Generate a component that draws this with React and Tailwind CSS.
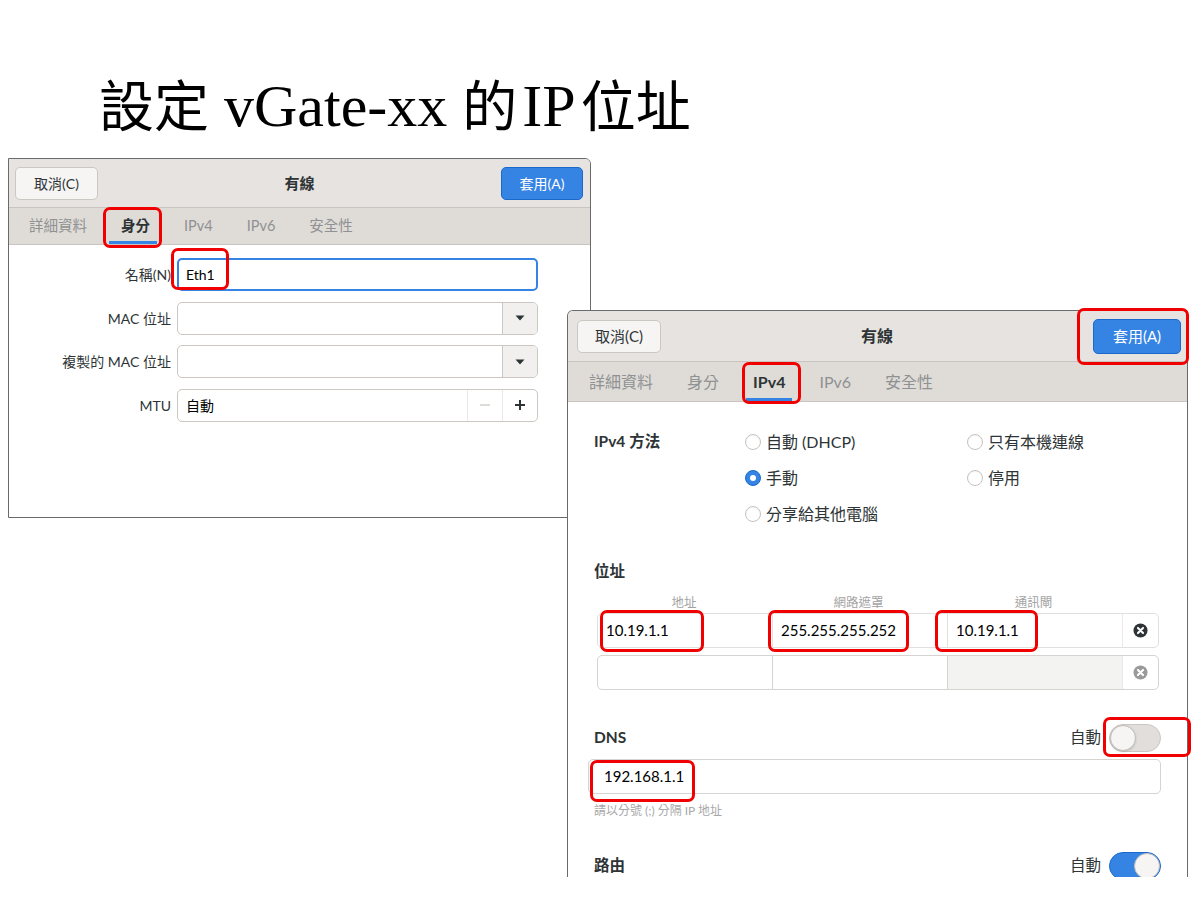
import React from 'react'

const ui = "font-['Lato','Noto_Sans_CJK_TC',sans-serif]"

function Caret() {
  return (
    <svg width="10" height="6" viewBox="0 0 10 6">
      <path d="M0.5 0.5 L9.5 0.5 L5 5.5 Z" fill="#2e3436" />
    </svg>
  )
}

function ClearIcon({ color }) {
  return (
    <svg width="15" height="15" viewBox="0 0 16 16">
      <circle cx="8" cy="8" r="7.5" fill={color} />
      <path d="M5.3 5.3 L10.7 10.7 M10.7 5.3 L5.3 10.7" stroke="#fff" strokeWidth="2.2" strokeLinecap="round" />
    </svg>
  )
}

function Radio({ checked, label }) {
  return (
    <div className="flex items-center h-[36px] gap-[5px]">
      {checked ? (
        <span className="w-[16px] h-[16px] rounded-full bg-[#3584e4] border border-[#1b6acb] flex items-center justify-center">
          <span className="w-[6px] h-[6px] rounded-full bg-white" />
        </span>
      ) : (
        <span className="w-[16px] h-[16px] rounded-full bg-white border border-[#c6c2be] shadow-[inset_0_1px_1px_rgba(0,0,0,0.05)]" />
      )}
      <span className="text-[16px] text-[#2e3436]">{label}</span>
    </div>
  )
}

function Toggle({ on }) {
  return on ? (
    <div className="w-[52px] h-[28px] rounded-full bg-[#3584e4] border border-[#1b6acb] flex items-center justify-end">
      <span className="w-[26px] h-[26px] rounded-full bg-[#f6f5f4] border border-[#c0bdba]" />
    </div>
  ) : (
    <div className="w-[52px] h-[28px] rounded-full bg-[#e1dedb] border border-[#cdc7c2] flex items-center">
      <span className="w-[26px] h-[26px] rounded-full bg-[#f6f5f4] border border-[#c0bdba] shadow-sm" />
    </div>
  )
}

function Tabs({ items, active, size }) {
  const lg = size === 'lg'
  return (
    <div className={`flex items-stretch bg-[#dfdcd8] border-b border-[#c9c4bf] ${lg ? 'h-[40px] pl-[4px] text-[16px]' : 'h-[37px] pl-[3px] text-[14.5px]'}`}>
      {items.map((t) => (
        <div key={t} className={`relative flex items-center ${lg ? 'px-[17px]' : 'px-[17px]'} ${t === active ? 'font-bold text-[#2e3436]' : 'text-[#8f9192]'}`}>
          {t}
          {t === active && (
            <span className={`absolute bottom-0 h-[3px] bg-[#3584e4] ${lg ? 'left-[10px] right-[10px]' : 'left-[5px] right-[10px]'}`} />
          )}
        </div>
      ))}
    </div>
  )
}

function RedBox({ className }) {
  return <div className={`absolute border-[3px] border-[#f00000] rounded-[7px] ${className}`} />
}

export default function App() {
  const tabs = ['詳細資料', '身分', 'IPv4', 'IPv6', '安全性']

  return (
    <div className="relative w-[1200px] h-[900px] bg-white overflow-hidden">
      <h1 className="pt-[76px] pl-[99px] h-[136px] leading-none text-black font-['Liberation_Serif','Noto_Sans_CJK_TC',serif] flex items-baseline whitespace-pre">
        <span className="text-[55px]">設定</span>
        <span className="text-[60px]"> vGate-xx </span>
        <span className="text-[55px]">的</span>
        <span className="text-[60px] mx-[5px]">IP</span>
        <span className="text-[55px]">位址</span>
      </h1>

      {/* window 1 */}
      <div className={`absolute left-[8px] top-[158px] w-[583px] h-[360px] border border-[#6a6a6a] rounded-tr-[6px] bg-white overflow-hidden ${ui}`}>
        <div className="h-[49px] flex items-center justify-between pl-[6px] pr-[7px] bg-[#e6e3e0] border-b border-[#c9c4bf]">
          <button className="w-[83px] h-[33px] rounded-[5px] bg-[#f6f5f4] border border-[#cdc7c2] text-[14px] text-[#2e3436]">取消(C)</button>
          <div className="text-[15px] font-bold text-[#2e3436]">有線</div>
          <button className="w-[82px] h-[33px] rounded-[5px] bg-[#3584e4] border border-[#1b6acb] text-[14px] text-white">套用(A)</button>
        </div>
        <Tabs items={tabs} active="身分" />
        <div className="pt-[13px] flex flex-col gap-[10.5px] text-[14px] text-[#2e3436]">
          <div className="flex items-center gap-[6px]">
            <div className="w-[162px] text-right">名稱(N)</div>
            <div className="w-[361px] h-[33px] rounded-[5px] border-2 border-[#3584e4] flex items-center pl-[7px] text-black">Eth1</div>
          </div>
          {['MAC 位址', '複製的 MAC 位址'].map((l) => (
            <div key={l} className="flex items-center gap-[6px]">
              <div className="w-[162px] text-right">{l}</div>
              <div className="w-[361px] h-[33px] rounded-[5px] border border-[#cdc7c2] flex overflow-hidden">
                <div className="flex-1" />
                <div className="w-[35px] bg-[#f1f0ef] border-l border-[#cdc7c2] flex items-center justify-center">
                  <Caret />
                </div>
              </div>
            </div>
          ))}
          <div className="flex items-center gap-[6px]">
            <div className="w-[162px] text-right">MTU</div>
            <div className="w-[361px] h-[33px] rounded-[5px] border border-[#cdc7c2] flex overflow-hidden">
              <div className="flex-1 flex items-center pl-[8px] text-black">自動</div>
              <div className="w-[35px] border-l border-[#ebe9e7] flex items-center justify-center">
                <svg width="12" height="12" viewBox="0 0 12 12"><path d="M1 6 H11" stroke="#d3d0cd" strokeWidth="1.5" /></svg>
              </div>
              <div className="w-[35px] border-l border-[#ebe9e7] flex items-center justify-center">
                <svg width="12" height="12" viewBox="0 0 12 12"><path d="M1 6 H11 M6 1 V11" stroke="#2e3436" strokeWidth="2" /></svg>
              </div>
            </div>
          </div>
        </div>
      </div>

      {/* window 2 */}
      <div className={`absolute left-[567px] top-[310px] w-[621px] h-[567px] border-x border-t border-[#6a6a6a] rounded-t-[6px] bg-white overflow-hidden ${ui}`}>
        <div className="h-[51px] flex items-center justify-between pl-[9px] pr-[6px] bg-[#e6e3e0] border-b border-[#c9c4bf]">
          <button className="w-[84px] h-[33px] rounded-[5px] bg-[#f6f5f4] border border-[#cdc7c2] text-[15px] text-[#2e3436]">取消(C)</button>
          <div className="text-[16px] font-bold text-[#2e3436]">有線</div>
          <button className="w-[88px] h-[35px] rounded-[5px] bg-[#3584e4] border border-[#1b6acb] text-[15px] text-white">套用(A)</button>
        </div>
        <Tabs items={tabs} active="IPv4" size="lg" />

        <div className="pl-[26px] pr-[26px] text-[#2e3436]">
          <div className="pt-[22px] flex">
            <div className="w-[151px] h-[36px] flex items-center text-[15.5px] font-bold">IPv4 方法</div>
            <div className="w-[222px]">
              <Radio label="自動 (DHCP)" />
              <Radio checked label="手動" />
              <Radio label="分享給其他電腦" />
            </div>
            <div>
              <Radio label="只有本機連線" />
              <Radio label="停用" />
            </div>
          </div>

          <div className="mt-[30px] h-[20px] flex items-center text-[15.5px] font-bold">位址</div>
          <div className="mt-[12px] ml-[3px] mr-[2px] h-[14px] flex text-[12.5px] text-[#a3a3a3]">
            <div className="w-[174px] text-center">地址</div>
            <div className="w-[175px] text-center">網路遮罩</div>
            <div className="w-[175px] text-center">通訊閘</div>
          </div>
          <div className="mt-[5px] ml-[3px] mr-[2px] h-[35px] flex rounded-[5px] border border-[#e2e0dd] text-[15px] text-black overflow-hidden">
            <div className="w-[174px] flex items-center pl-[8px]">10.19.1.1</div>
            <div className="w-[175px] flex items-center pl-[8px] border-l border-[#e2e0dd]">255.255.255.252</div>
            <div className="w-[175px] flex items-center pl-[8px] border-l border-[#e2e0dd]">10.19.1.1</div>
            <div className="flex-1 flex items-center justify-center border-l border-[#ebe9e7]">
              <ClearIcon color="#2e3436" />
            </div>
          </div>
          <div className="mt-[7px] ml-[3px] mr-[2px] h-[35px] flex rounded-[5px] border border-[#d6d3d0] overflow-hidden">
            <div className="w-[174px]" />
            <div className="w-[175px] border-l border-[#d6d3d0]" />
            <div className="w-[175px] border-l border-[#d6d3d0] bg-[#f3f3f2]" />
            <div className="flex-1 flex items-center justify-center border-l border-[#ebe9e7]">
              <ClearIcon color="#9a9a9a" />
            </div>
          </div>

          <div className="mt-[34px] h-[28px] flex items-center justify-between">
            <div className="text-[15.5px] font-bold">DNS</div>
            <div className="flex items-center gap-[8px] text-[15.5px]">
              自動
              <Toggle />
            </div>
          </div>
          <div className="mt-[7px] ml-[-6px] h-[35px] rounded-[5px] border border-[#d6d3d0] flex items-center pl-[15px] text-[15px] text-black">
            192.168.1.1
          </div>
          <div className="mt-[10px] h-[14px] flex items-center text-[12px] text-[#a8a8a8]">請以分號 (;) 分隔 IP 地址</div>

          <div className="mt-[34px] h-[28px] flex items-center justify-between">
            <div className="text-[15.5px] font-bold">路由</div>
            <div className="flex items-center gap-[8px] text-[15.5px]">
              自動
              <Toggle on />
            </div>
          </div>
        </div>
      </div>

      {/* annotations */}
      <RedBox className="left-[103px] top-[207px] w-[59px] h-[41px]" />
      <RedBox className="left-[171px] top-[248px] w-[58px] h-[42px]" />
      <RedBox className="left-[1077px] top-[308px] w-[112px] h-[57px]" />
      <RedBox className="left-[742px] top-[362px] w-[59px] h-[42px]" />
      <RedBox className="left-[600px] top-[610px] w-[104px] h-[42px]" />
      <RedBox className="left-[768px] top-[610px] w-[141px] h-[42px]" />
      <RedBox className="left-[935px] top-[610px] w-[103px] h-[42px]" />
      <RedBox className="left-[1103px] top-[717px] w-[88px] h-[40px]" />
      <RedBox className="left-[590px] top-[760px] w-[105px] h-[42px]" />
    </div>
  )
}
